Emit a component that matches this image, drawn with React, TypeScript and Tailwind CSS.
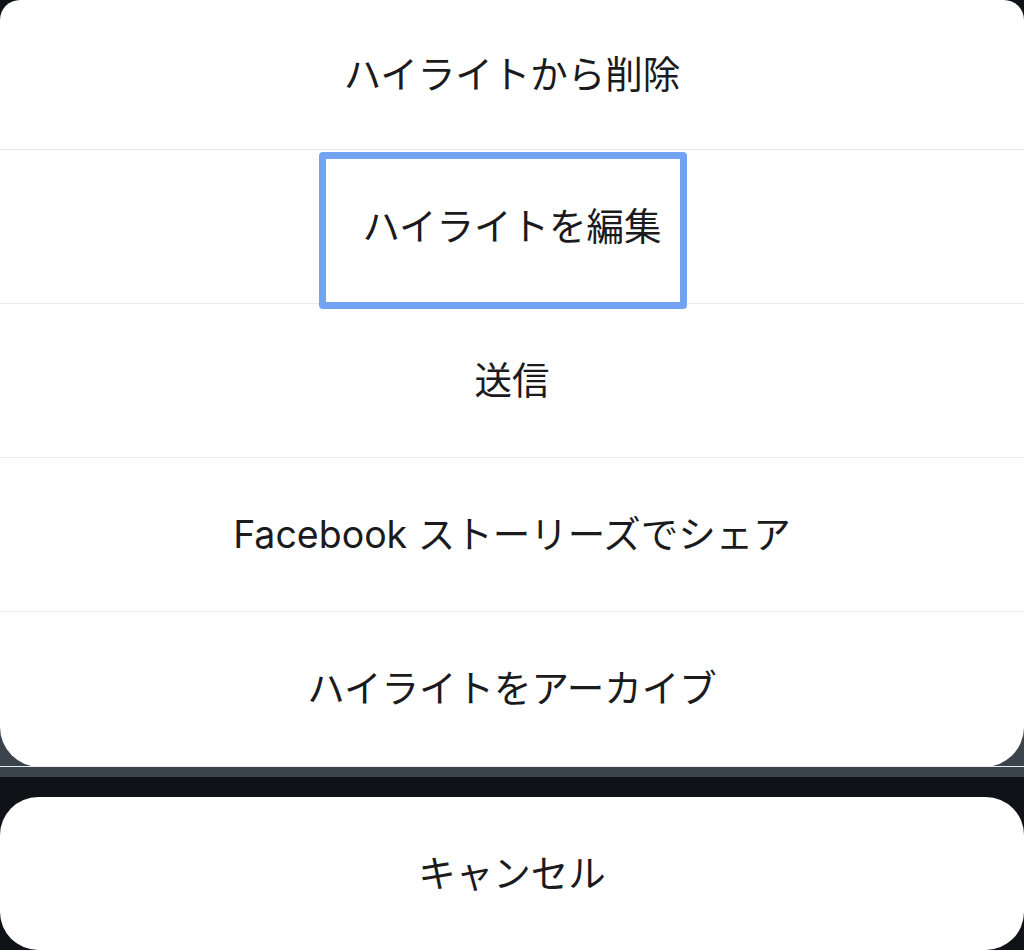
import React from "react";

const rows = [
  { id: 1, label: "ハイライトから削除", h: "h-[150px]" },
  { id: 2, label: "ハイライトを編集", h: "h-[154px]" },
  { id: 3, label: "送信", h: "h-[154px]" },
  { id: 4, label: "Facebook ストーリーズでシェア", h: "h-[154px]" },
  { id: 5, label: "ハイライトをアーカイブ", h: "h-[155px]" },
];

const App = () => {
  return (
    <div className="w-[1024px] h-[950px] overflow-hidden bg-[#0f1216] font-['Inter','Noto_Sans_CJK_JP',sans-serif] text-[#1b1b1d]">
      <div className="pb-[10px] bg-[linear-gradient(to_bottom,#0f1216_400px,#3b434c_400px)]">
        <div className="relative bg-white rounded-t-[20px] rounded-b-[40px] flex flex-col divide-y divide-[#ebebeb]">
          {rows.map(({ id, label, h }) => (
            <div key={id} className={`${h} flex items-center justify-center text-[37.5px] leading-none`}>
              {label}
            </div>
          ))}
          {/* selection outline drawn over the second row */}
          <div className="absolute left-[319px] top-[152px] w-[368px] h-[157px] border-[7px] border-[#72a2f3] rounded-[4px]" />
        </div>
      </div>
      <div className="mt-[20px] h-[153px] bg-white rounded-[38px] flex items-center justify-center text-[37.5px] leading-none">
        キャンセル
      </div>
    </div>
  );
};

export default App;
